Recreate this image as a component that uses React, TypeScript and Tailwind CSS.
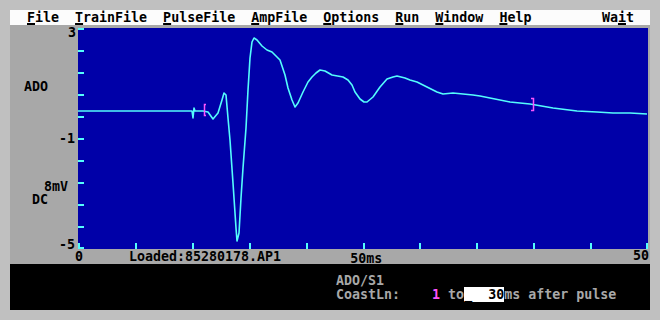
import React from 'react';

const trace: [number, number][] = [
  [0, 83], [114, 83], [115, 90], [116, 80], [117, 83], [125, 83], [130, 84], [135, 91], [140, 85],
  [144, 72], [146, 65], [148, 67], [150, 90], [152, 112], [155, 155], [158, 200], [159, 213],
  [161, 205], [163, 170], [165, 140], [168, 100], [170, 62], [172, 30], [174, 14], [176, 10],
  [179, 12], [184, 18], [189, 22], [194, 24], [199, 29], [202, 32], [207, 47], [210, 60],
  [214, 72], [217, 79], [220, 75], [225, 64], [230, 54], [234, 49], [238, 45], [242, 42],
  [247, 43], [254, 47], [265, 49], [270, 52], [274, 57], [277, 64], [282, 71], [286, 74],
  [289, 74], [295, 69], [302, 59], [309, 51], [315, 49], [319, 48], [327, 50], [332, 52],
  [339, 54], [349, 59], [359, 64], [365, 66], [375, 65], [385, 66], [395, 67], [402, 68],
  [412, 70], [432, 74], [452, 76], [475, 80], [499, 83], [519, 84], [535, 85], [552, 85], [569, 86],
];

const yTicks = [0, 22, 44, 66, 88, 110, 132, 154, 176, 198, 219];
const xTicks = [0, 57, 114, 171, 228, 285, 341, 398, 455, 512, 568];

const menu = [
  { k: 'F', rest: 'ile' },
  { k: 'T', rest: 'rainFile' },
  { k: 'P', rest: 'ulseFile' },
  { k: 'A', rest: 'mpFile' },
  { k: 'O', rest: 'ptions' },
  { k: 'R', rest: 'un' },
  { k: 'W', rest: 'indow' },
  { k: 'H', rest: 'elp' },
];

export default function App() {
  return (
    <div className="w-[660px] h-[320px] bg-[#c0c0c0] pt-[10px] pl-[10px] font-['DejaVu_Sans_Mono',monospace] font-bold text-[13.3px] leading-[14px]">
      <div className="w-[640px] flex flex-col">
        {/* menu bar */}
        <div className="h-[15px] bg-[#fcfcfc] text-black leading-[15px] flex whitespace-pre pl-[17px] pr-[16px]">
          {menu.map((m, i) => (
            <span key={i} className={i > 0 ? 'ml-[16px]' : ''}>
              <span className="underline decoration-2 underline-offset-[1px]">{m.k}</span>
              {m.rest}
            </span>
          ))}
          <span className="ml-auto">
            Wa<span className="underline decoration-2 underline-offset-[1px]">i</span>t
          </span>
        </div>

        {/* plot area */}
        <div className="h-[239px] bg-[#a8a8a8] pt-[3px] text-black">
          <div className="flex h-[221px]">
            <div className="w-[68px] flex flex-col">
              <span className="self-end mr-[2px] mt-[-2px]">3</span>
              <span className="ml-[14px] mt-[40px]">ADO</span>
              <span className="self-end mr-[3px] mt-[38px]">-1</span>
              <span className="ml-[34px] mt-[34px]">8mV</span>
              <span className="ml-[22px] mt-[-1px]">DC</span>
              <span className="self-end mr-[3px] mt-[31px]">-5</span>
            </div>
            <div className="w-[570px] bg-[#0000a8]">
              <svg width="570" height="221" viewBox="0 0 570 221">
                {yTicks.map((y) => (
                  <rect key={'y' + y} x={0} y={y} width={6} height={2} fill="#54fcfc" />
                ))}
                {xTicks.map((x) => (
                  <rect key={'x' + x} x={x} y={215} width={2} height={6} fill="#54fcfc" />
                ))}
                <polyline
                  points={trace.map((p) => p.join(',')).join(' ')}
                  fill="none"
                  stroke="#54fcfc"
                  strokeWidth={1.6}
                  strokeLinejoin="round"
                />
                <path d="M128 76.5 H126.5 V87.5 H128" fill="none" stroke="#fc54fc" strokeWidth={1.5} />
                <path d="M453 70.5 H455.5 V82.5 H453" fill="none" stroke="#fc54fc" strokeWidth={1.5} />
              </svg>
            </div>
          </div>
          <div className="h-[15px] flex items-start pt-[1px] whitespace-pre">
            <span className="ml-[65px]">0</span>
            <span className="ml-[46px]">Loaded:85280178.AP1</span>
            <span className="ml-[69px] mt-[2px]">50ms</span>
            <span className="ml-auto mr-[1px] mt-[-1px]">50</span>
          </div>
        </div>

        {/* status panel */}
        <div className="h-[46px] bg-black text-[#a8a8a8] pt-[10px] pl-[326px] whitespace-pre">
          <div>ADO/S1</div>
          <div>
            {'CoastLn:    '}
            <span className="text-[#fc54fc]">1</span>
            {' to'}
            <span className="bg-white text-black">{'_  30'}</span>
            {'ms after pulse'}
          </div>
        </div>
      </div>
    </div>
  );
}
